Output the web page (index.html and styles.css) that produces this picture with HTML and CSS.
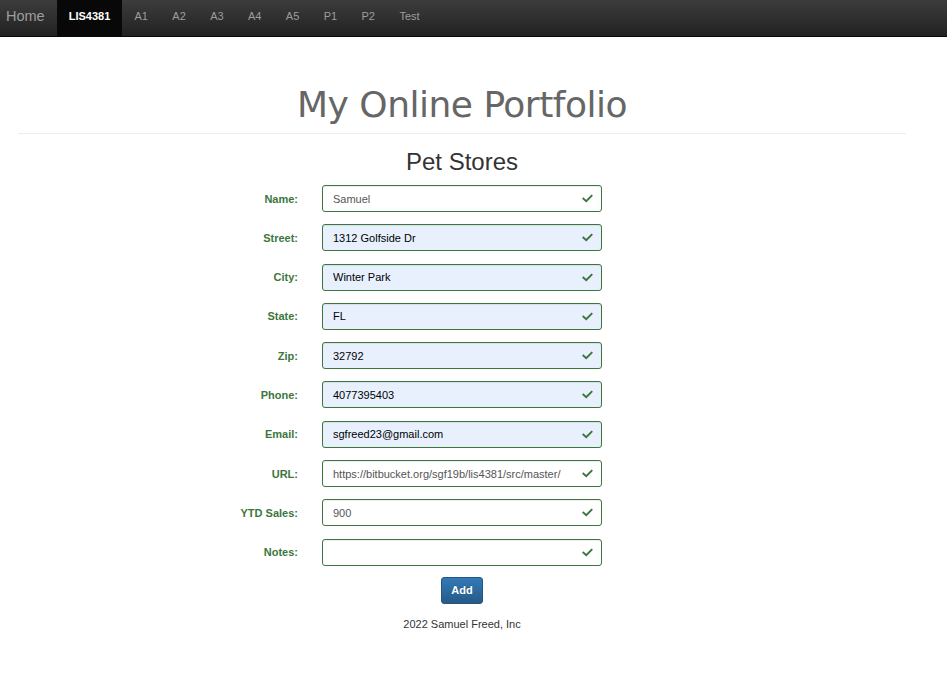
FILE: index.html
```html
<!DOCTYPE html>
<html>
<head>
<meta charset="utf-8">
<link rel="stylesheet" href="styles.css">
<title>Pet Stores</title>
</head>
<body>
<nav class="navbar">
  <a class="brand" href="#">Home</a>
  <a class="nav-item active" href="#">LIS4381</a>
  <a class="nav-item" href="#">A1</a>
  <a class="nav-item" href="#">A2</a>
  <a class="nav-item" href="#">A3</a>
  <a class="nav-item" href="#">A4</a>
  <a class="nav-item" href="#">A5</a>
  <a class="nav-item" href="#">P1</a>
  <a class="nav-item" href="#">P2</a>
  <a class="nav-item" href="#">Test</a>
</nav>
<div class="page">
  <div class="container">
    <div class="page-header"><h1>My Online Portfolio</h1></div>
    <h2>Pet Stores</h2>
    <form class="form">
      <div class="row"><label>Name:</label><div class="field"><span class="value">Samuel</span><svg class="check" viewBox="0 0 12 10"><path d="M1.5 5.2 L4.6 8 L10.5 2" /></svg></div></div>
      <div class="row"><label>Street:</label><div class="field auto"><span class="value">1312 Golfside Dr</span><svg class="check" viewBox="0 0 12 10"><path d="M1.5 5.2 L4.6 8 L10.5 2" /></svg></div></div>
      <div class="row"><label>City:</label><div class="field auto"><span class="value">Winter Park</span><svg class="check" viewBox="0 0 12 10"><path d="M1.5 5.2 L4.6 8 L10.5 2" /></svg></div></div>
      <div class="row"><label>State:</label><div class="field auto"><span class="value">FL</span><svg class="check" viewBox="0 0 12 10"><path d="M1.5 5.2 L4.6 8 L10.5 2" /></svg></div></div>
      <div class="row"><label>Zip:</label><div class="field auto"><span class="value">32792</span><svg class="check" viewBox="0 0 12 10"><path d="M1.5 5.2 L4.6 8 L10.5 2" /></svg></div></div>
      <div class="row"><label>Phone:</label><div class="field auto"><span class="value">4077395403</span><svg class="check" viewBox="0 0 12 10"><path d="M1.5 5.2 L4.6 8 L10.5 2" /></svg></div></div>
      <div class="row"><label>Email:</label><div class="field auto"><span class="value">sgfreed23@gmail.com</span><svg class="check" viewBox="0 0 12 10"><path d="M1.5 5.2 L4.6 8 L10.5 2" /></svg></div></div>
      <div class="row"><label>URL:</label><div class="field"><span class="value">https://bitbucket.org/sgf19b/lis4381/src/master/</span><svg class="check" viewBox="0 0 12 10"><path d="M1.5 5.2 L4.6 8 L10.5 2" /></svg></div></div>
      <div class="row"><label>YTD Sales:</label><div class="field"><span class="value">900</span><svg class="check" viewBox="0 0 12 10"><path d="M1.5 5.2 L4.6 8 L10.5 2" /></svg></div></div>
      <div class="row"><label>Notes:</label><div class="field"><span class="value"></span><svg class="check" viewBox="0 0 12 10"><path d="M1.5 5.2 L4.6 8 L10.5 2" /></svg></div></div>
      <div class="actions"><button type="button" class="btn">Add</button></div>
    </form>
    <footer class="footer">2022 Samuel Freed, Inc</footer>
  </div>
</div>
</body>
</html>
```
FILE: styles.css
```css
* { box-sizing: border-box; }
body {
  margin: 0;
  font-family: "Liberation Sans", Arial, sans-serif;
  font-size: 11px;
  color: #333;
  background: #fff;
}
.navbar {
  display: flex;
  align-items: stretch;
  height: 37px;
  background: linear-gradient(to bottom, #3c3c3c 0%, #222 100%);
  border-bottom: 1px solid #080808;
}
.navbar a { text-decoration: none; display: block; }
.brand {
  color: #9d9d9d;
  font-size: 14.5px;
  line-height: 33px;
  padding: 0 12px 0 6px;
}
.nav-item {
  color: #9d9d9d;
  font-size: 11px;
  line-height: 33px;
  padding: 0 12.2px;
}
.nav-item.active {
  background: #080808;
  color: #fff;
  font-weight: bold;
  padding: 0 12px;
}
.page { width: 924px; }
.container { margin: 0 18px; }
.page-header {
  margin-top: 45px;
  border-bottom: 1px solid #eee;
  text-align: center;
  padding-bottom: 5px;
}
h1 {
  margin: 0;
  font-family: "DejaVu Sans", sans-serif;
  font-weight: normal;
  font-size: 36px;
  line-height: 46px;
  color: #666;
  letter-spacing: -0.5px;
}
h2 {
  margin: 13px 0 8px;
  text-align: center;
  font-weight: normal;
  font-size: 24px;
  line-height: 30px;
  color: #333;
}
.form { display: flex; flex-direction: column; align-items: center; }
.row {
  display: flex;
  align-items: center;
  gap: 24px;
  height: 27px;
  margin-bottom: 12.3px;
  width: 560px;
}
.row label {
  width: 116px;
  text-align: right;
  font-weight: bold;
  color: #3c763d;
  font-size: 11px;
}
.field {
  width: 280px;
  height: 27px;
  border: 1px solid #3c763d;
  border-radius: 3px;
  background: #fff;
  display: flex;
  align-items: center;
  padding: 0 8px 0 10px;
  box-shadow: inset 0 1px 1px rgba(0,0,0,.075);
}
.field.auto { background: #e8f0fe; }
.value { flex: 1; color: #555; font-size: 11px; white-space: nowrap; overflow: hidden; }
.field.auto .value { color: #000; }
.check { width: 11px; height: 9px; flex: none; }
.check path { fill: none; stroke: #3c763d; stroke-width: 2.2; stroke-linecap: square; }
.actions { margin-top: -1px; }
.btn {
  width: 42px;
  height: 27px;
  border: 1px solid #245580;
  border-radius: 3px;
  background: linear-gradient(to bottom, #337ab7 0%, #265a88 100%);
  color: #fff;
  font-family: "Liberation Sans", Arial, sans-serif;
  font-weight: bold;
  font-size: 11px;
  padding: 0;
  text-shadow: 0 -1px 0 rgba(0,0,0,.2);
}
.footer {
  text-align: center;
  margin-top: 14px;
  font-size: 11px;
  color: #333;
}
```
